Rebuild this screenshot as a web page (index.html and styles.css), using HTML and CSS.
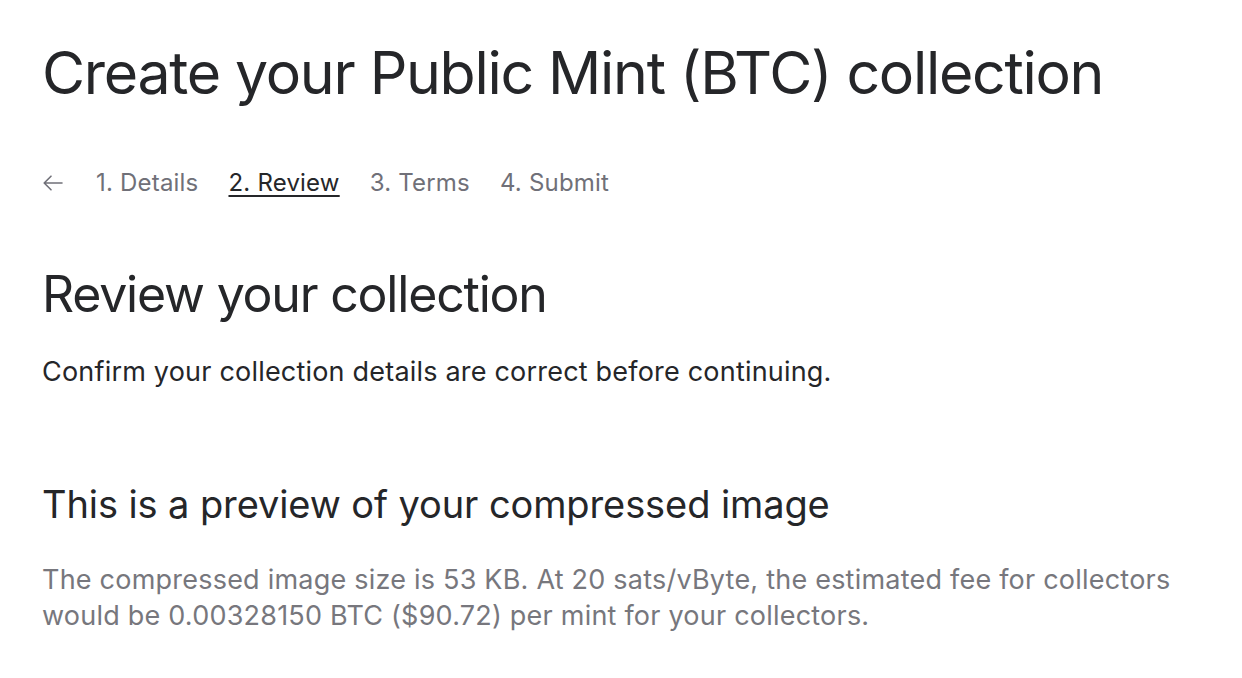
FILE: index.html
```html
<!DOCTYPE html>
<html lang="en">
<head>
<meta charset="utf-8">
<link rel="stylesheet" href="styles.css">
</head>
<body>
<main class="page">
  <h1 class="title">Create your Public Mint (BTC) collection</h1>
  <nav class="steps">
    <span class="back"><svg width="24" height="24" viewBox="0 0 24 24" fill="none" stroke="currentColor" stroke-width="1.6" stroke-linecap="round" stroke-linejoin="round"><path d="M20 12H2.8M9 5.2L2.2 12L9 18.8"/></svg></span>
    <span class="step">1. Details</span>
    <span class="step active">2. Review</span>
    <span class="step">3. Terms</span>
    <span class="step">4. Submit</span>
  </nav>
  <h2 class="section-title">Review your collection</h2>
  <p class="lead">Confirm your collection details are correct before continuing.</p>
  <h3 class="sub-title">This is a preview of your compressed image</h3>
  <p class="note">The compressed image size is 53 KB. At 20 sats/vByte, the estimated fee for collectors would be 0.00328150 BTC ($90.72) per mint for your collectors.</p>
</main>
</body>
</html>
```
FILE: styles.css
```css
* { box-sizing: border-box; }
html, body { margin: 0; padding: 0; background: #ffffff; }
body { font-family: Inter, "Noto Sans", sans-serif; color: #252629; }
.page { padding: 38px 42px 0 42px; display: flex; flex-direction: column; }
.title { margin: 0; font-size: 59px; font-weight: 400; line-height: 70px; letter-spacing: -1.3px; }
.steps { display: flex; align-items: center; gap: 30px; margin-top: 61px; font-size: 24px; color: #707078; line-height: 28px; letter-spacing: 0.2px; height: 28px; }
.back { display: flex; align-items: center; width: 24px; height: 28px; color: #707078; }
.step.active { color: #252629; text-decoration: underline; text-underline-offset: 4px; text-decoration-thickness: 2px; }
.section-title { margin: 67px 0 0; font-size: 50px; font-weight: 400; line-height: 60px; letter-spacing: -1.2px; }
.lead { margin: 32px 0 0; font-size: 27px; line-height: 32px; letter-spacing: 0.2px; }
.sub-title { margin: 93px 0 0; font-size: 38px; font-weight: 400; line-height: 46px; letter-spacing: -0.1px; }
.note { margin: 35px 0 0; font-size: 27px; line-height: 36px; color: #77777d; letter-spacing: 0.22px; }
```
